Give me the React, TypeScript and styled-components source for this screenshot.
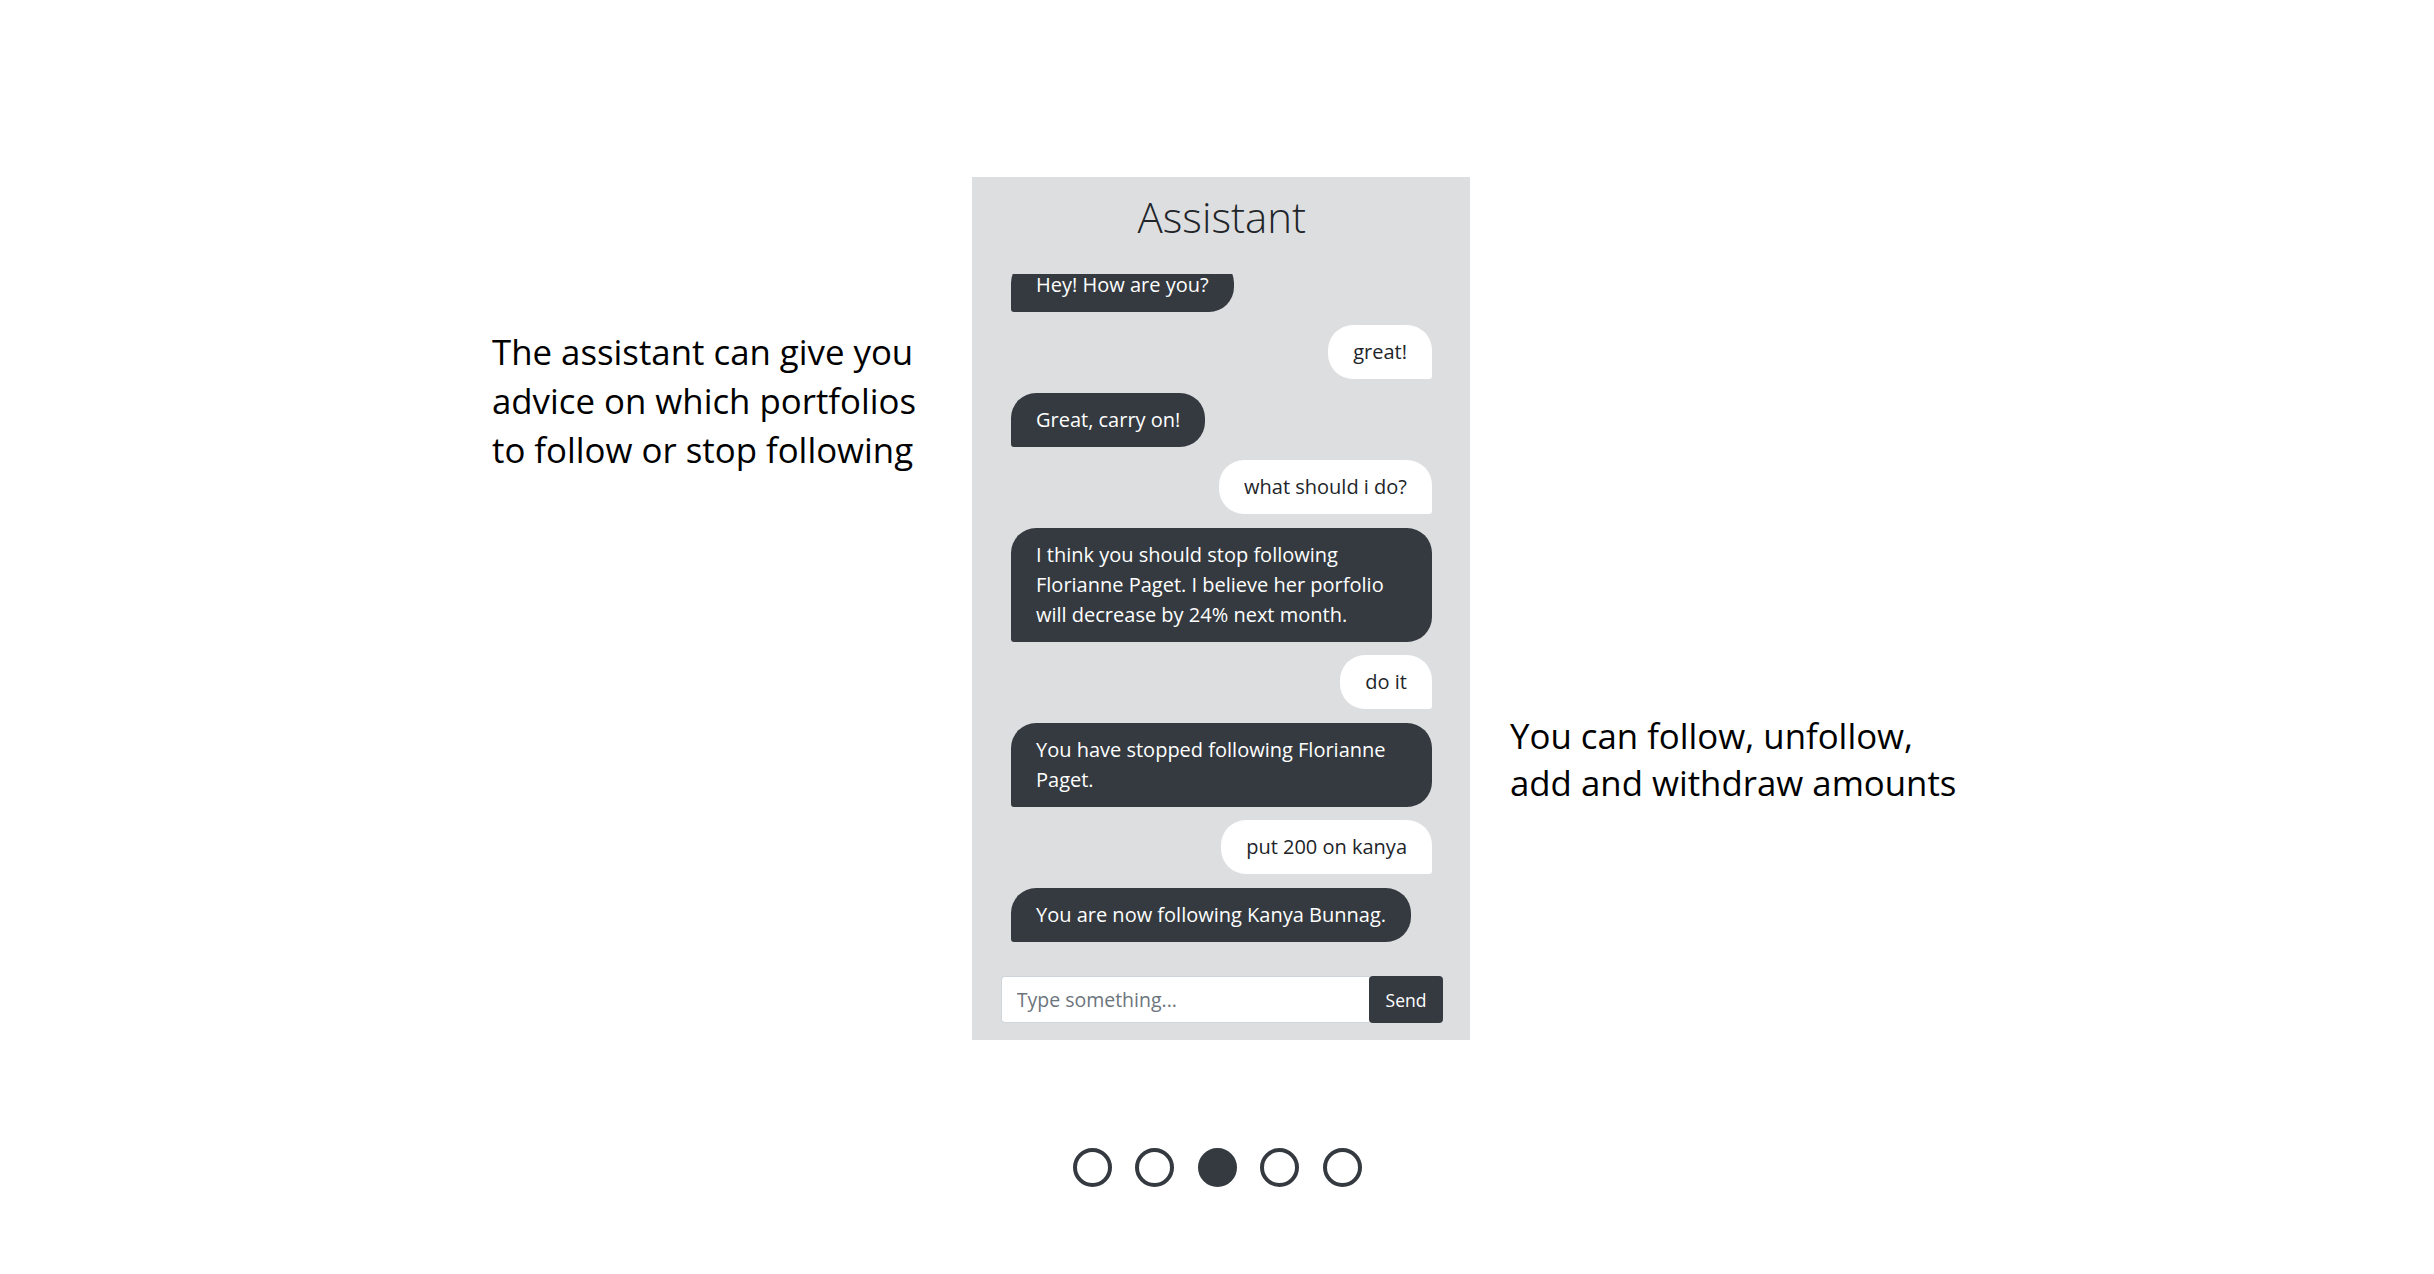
import React from "react";
import styled, { createGlobalStyle } from "styled-components";

const GlobalStyle = createGlobalStyle`
  html, body {
    margin: 0;
    padding: 0;
    background: #ffffff;
    font-family: "Open Sans", "Liberation Sans", sans-serif;
    color: #212529;
  }
  * { box-sizing: border-box; }
`;

const Page = styled.div`
  padding-top: 177px;
  display: flex;
  flex-direction: column;
  align-items: stretch;
`;

const Row = styled.div`
  display: grid;
  grid-template-columns: 1fr 498px 1fr;
  column-gap: 40px;
  padding-left: 8px;
`;

const SideText = styled.p<{ $side: "left" | "right"; $top: number; $lh: number }>`
  margin: ${(p) => p.$top}px 0 0 0;
  justify-self: ${(p) => (p.$side === "left" ? "end" : "start")};
  width: ${(p) => (p.$side === "left" ? "440px" : "auto")};
  align-self: start;
  font-family: "Open Sans", "Liberation Sans", sans-serif;
  font-size: 34.8px;
  line-height: ${(p) => p.$lh}px;
  color: #000000;
  white-space: nowrap;
`;

const Panel = styled.section`
  width: 498px;
  height: 863px;
  background: #dddee0;
  display: flex;
  flex-direction: column;
  padding: 15px 27px 17.3px 28.7px;
`;

const Title = styled.h2`
  margin: 0 0 33px 0;
  font-family: "Open Sans", sans-serif;
  font-weight: 300;
  font-size: 42px;
  line-height: 49px;
  text-align: center;
  color: #212529;
`;

const Messages = styled.div`
  flex: 1;
  min-height: 0;
  overflow: hidden;
  display: flex;
  flex-direction: column;
  justify-content: flex-end;
  gap: 13.5px;
  padding: 0 11px 0 10.3px;
`;

const Bubble = styled.div<{ $mine: boolean }>`
  flex-shrink: 0;
  align-self: ${(p) => (p.$mine ? "flex-end" : "flex-start")};
  max-width: 100%;
  padding: 12px 25px;
  font-size: 20px;
  line-height: 30px;
  background: ${(p) => (p.$mine ? "#ffffff" : "#343a40")};
  color: ${(p) => (p.$mine ? "#212529" : "#ffffff")};
  border-radius: ${(p) => (p.$mine ? "25px 25px 3px 25px" : "25px 25px 25px 3px")};
`;

const InputRow = styled.form`
  margin-top: 34.6px;
  height: 46.4px;
  display: flex;
`;

const TextInput = styled.input`
  flex: 1;
  min-width: 0;
  height: 100%;
  border: 1px solid #ced4da;
  border-right: none;
  border-radius: 4px 0 0 4px;
  background: #ffffff;
  padding: 0 15px;
  font-family: "Open Sans", sans-serif;
  font-size: 19.5px;
  color: #495057;
  outline: none;
  &::placeholder {
    color: #6c757d;
  }
`;

const SendButton = styled.button`
  width: 74px;
  height: 100%;
  border: none;
  border-radius: 4px;
  background: #343a40;
  color: #ffffff;
  font-family: "Open Sans", sans-serif;
  font-size: 17.5px;
  padding: 0;
  cursor: pointer;
`;

const Dots = styled.div`
  margin-top: 107.5px;
  display: flex;
  justify-content: center;
  gap: 23.5px;
`;

const Dot = styled.span<{ $active: boolean }>`
  width: 39px;
  height: 39px;
  border-radius: 50%;
  border: 4px solid #343a40;
  background: ${(p) => (p.$active ? "#343a40" : "transparent")};
`;

const messages: { mine: boolean; text: string }[] = [
  { mine: false, text: "Hey! How are you?" },
  { mine: true, text: "great!" },
  { mine: false, text: "Great, carry on!" },
  { mine: true, text: "what should i do?" },
  {
    mine: false,
    text: "I think you should stop following Florianne Paget. I believe her porfolio will decrease by 24% next month.",
  },
  { mine: true, text: "do it" },
  { mine: false, text: "You have stopped following Florianne Paget." },
  { mine: true, text: "put 200 on kanya" },
  { mine: false, text: "You are now following Kanya Bunnag." },
];

export default function App() {
  return (
    <>
      <GlobalStyle />
      <Page>
        <Row>
          <SideText $side="left" $top={150} $lh={49}>
            The assistant can give you
            <br />
            advice on which portfolios
            <br />
            to follow or stop following
          </SideText>
          <Panel>
            <Title>Assistant</Title>
            <Messages>
              {messages.map((m, i) => (
                <Bubble key={i} $mine={m.mine}>
                  {m.text}
                </Bubble>
              ))}
            </Messages>
            <InputRow onSubmit={(e) => e.preventDefault()}>
              <TextInput placeholder="Type something..." />
              <SendButton type="submit">Send</SendButton>
            </InputRow>
          </Panel>
          <SideText $side="right" $top={534.5} $lh={47}>
            You can follow, unfollow,
            <br />
            add and withdraw amounts
          </SideText>
        </Row>
        <Dots>
          {[0, 1, 2, 3, 4].map((i) => (
            <Dot key={i} $active={i === 2} />
          ))}
        </Dots>
      </Page>
    </>
  );
}
